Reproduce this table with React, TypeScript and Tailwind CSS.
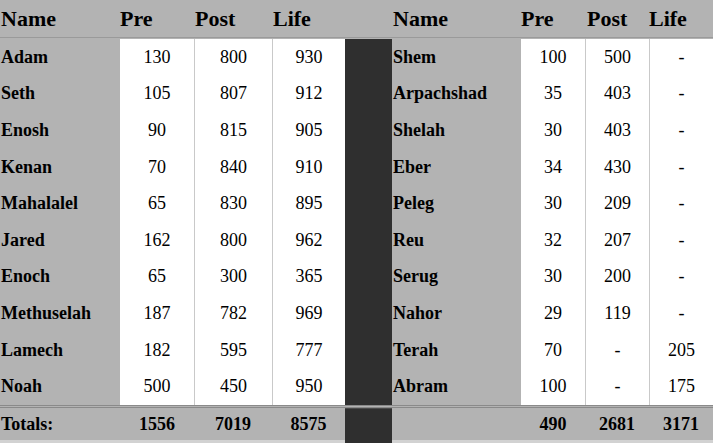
import React from "react";

const left = [
	["Adam", "130", "800", "930"],
	["Seth", "105", "807", "912"],
	["Enosh", "90", "815", "905"],
	["Kenan", "70", "840", "910"],
	["Mahalalel", "65", "830", "895"],
	["Jared", "162", "800", "962"],
	["Enoch", "65", "300", "365"],
	["Methuselah", "187", "782", "969"],
	["Lamech", "182", "595", "777"],
	["Noah", "500", "450", "950"],
];

const right = [
	["Shem", "100", "500", "-"],
	["Arpachshad", "35", "403", "-"],
	["Shelah", "30", "403", "-"],
	["Eber", "34", "430", "-"],
	["Peleg", "30", "209", "-"],
	["Reu", "32", "207", "-"],
	["Serug", "30", "200", "-"],
	["Nahor", "29", "119", "-"],
	["Terah", "70", "-", "205"],
	["Abram", "100", "-", "175"],
];

const cols = "grid grid-cols-[120px_74px_78px_73px_47px_129px_64px_64px_64px]";

export default function App() {
	return (
		<div
			className="w-[713px] h-[443px] overflow-hidden bg-[#b3b3b3] text-black"
			style={{ fontFamily: '"Liberation Serif", "Times New Roman", serif' }}
		>
			{/* header */}
			<div className={`${cols} h-[38px] items-center border-b border-[#9a9a9a] text-[22px] font-bold`}>
				<div className="pl-px">Name</div>
				<div>Pre</div>
				<div className="pl-px">Post</div>
				<div className="pl-px">Life</div>
				<div />
				<div className="pl-px">Name</div>
				<div>Pre</div>
				<div className="pl-[2px]">Post</div>
				<div>Life</div>
			</div>

			{/* body */}
			<div className="h-[367px] pt-px">
				{left.map((l, i) => {
					const r = right[i];
					return (
						<div key={l[0]} className={`${cols} h-[36.6px] text-[18px]`}>
							<div className="flex items-center pl-px font-bold">{l[0]}</div>
							<div className="flex items-center justify-center bg-white">{l[1]}</div>
							<div className="flex items-center justify-center bg-white border-l border-[#c9c9c9]">{l[2]}</div>
							<div className="flex items-center justify-center bg-white border-l border-[#c9c9c9]">{l[3]}</div>
							<div className="bg-[#2f2f2f]" />
							<div className="flex items-center pl-px font-bold">{r[0]}</div>
							<div className="flex items-center justify-center bg-white">{r[1]}</div>
							<div className="flex items-center justify-center bg-white border-l border-[#c9c9c9]">{r[2]}</div>
							<div className="flex items-center justify-center bg-white border-l border-[#c9c9c9]">{r[3]}</div>
						</div>
					);
				})}
			</div>

			{/* totals */}
			<div className={`${cols} h-[38px] border-t-[3px] border-double border-[#8a8a8a] text-[18px] font-bold`}>
				<div className="flex items-center pl-px border-b-[3px] border-[#d2d2d2]">Totals:</div>
				<div className="flex items-center justify-center border-b-[3px] border-[#d2d2d2]">1556</div>
				<div className="flex items-center justify-center border-b-[3px] border-[#d2d2d2]">7019</div>
				<div className="flex items-center justify-center border-b-[3px] border-[#d2d2d2]">8575</div>
				<div className="bg-[#2f2f2f] border-t border-[#4a4a4a]" />
				<div className="border-b-[3px] border-[#d2d2d2]" />
				<div className="flex items-center justify-center border-b-[3px] border-[#d2d2d2]">490</div>
				<div className="flex items-center justify-center border-b-[3px] border-[#d2d2d2]">2681</div>
				<div className="flex items-center justify-center border-b-[3px] border-[#d2d2d2]">3171</div>
			</div>
		</div>
	);
}
